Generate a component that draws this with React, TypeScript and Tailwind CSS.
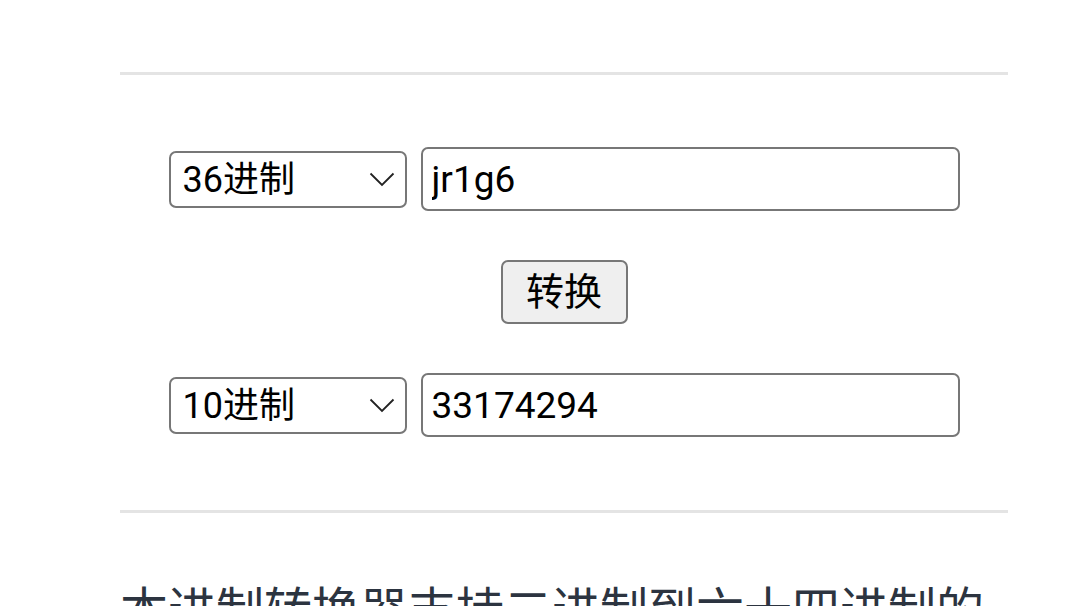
import React from "react";

const font = { fontFamily: '"Roboto", "Noto Sans CJK SC", sans-serif' };

function Select({ value }: { value: string }) {
  return (
    <div className="relative w-[238px] h-[57px]">
      <select
        defaultValue={value}
        className="appearance-none w-full h-full border-[2.5px] border-[#777777] rounded-[7px] bg-white pl-[12px] text-[36px] text-black outline-none"
        style={font}
      >
        <option>{value}</option>
      </select>
      <svg
        className="absolute right-[12px] top-[21px] pointer-events-none"
        width="26"
        height="15"
        viewBox="0 0 26 15"
        fill="none"
      >
        <path d="M1.5 1.5 L13 13 L24.5 1.5" stroke="#222" strokeWidth="1.8" />
      </svg>
    </div>
  );
}

function Input({ value }: { value: string }) {
  return (
    <input
      defaultValue={value}
      className="w-[539px] h-[64px] border-[2.5px] border-[#777777] rounded-[7px] bg-white pl-[9px] text-[37px] text-black outline-none"
      style={font}
    />
  );
}

export default function App() {
  return (
    <div className="w-[1080px] h-[606px] overflow-hidden bg-white" style={font}>
      <div className="ml-[120px] w-[888px] pt-[72px]">
        <div className="h-[3px] bg-[#e4e4e4]" />
        <div className="flex flex-col items-center pt-[72px]">
          <div className="flex items-center gap-[14px]">
            <Select value="36进制" />
            <Input value="jr1g6" />
          </div>
          <button
            className="mt-[49px] w-[127px] h-[64px] bg-[#efefef] border-[2.5px] border-[#777777] rounded-[7px] text-[38px] leading-none text-black"
            style={font}
          >
            转换
          </button>
          <div className="mt-[49px] flex items-center gap-[14px]">
            <Select value="10进制" />
            <Input value="33174294" />
          </div>
        </div>
        <div className="mt-[73px] h-[3px] bg-[#e4e4e4]" />
        <p className="mt-[63px] text-[48px] text-[#2c3440] leading-[69px]" style={font}>
          本进制转换器支持二进制到六十四进制的互相转换
        </p>
      </div>
    </div>
  );
}
